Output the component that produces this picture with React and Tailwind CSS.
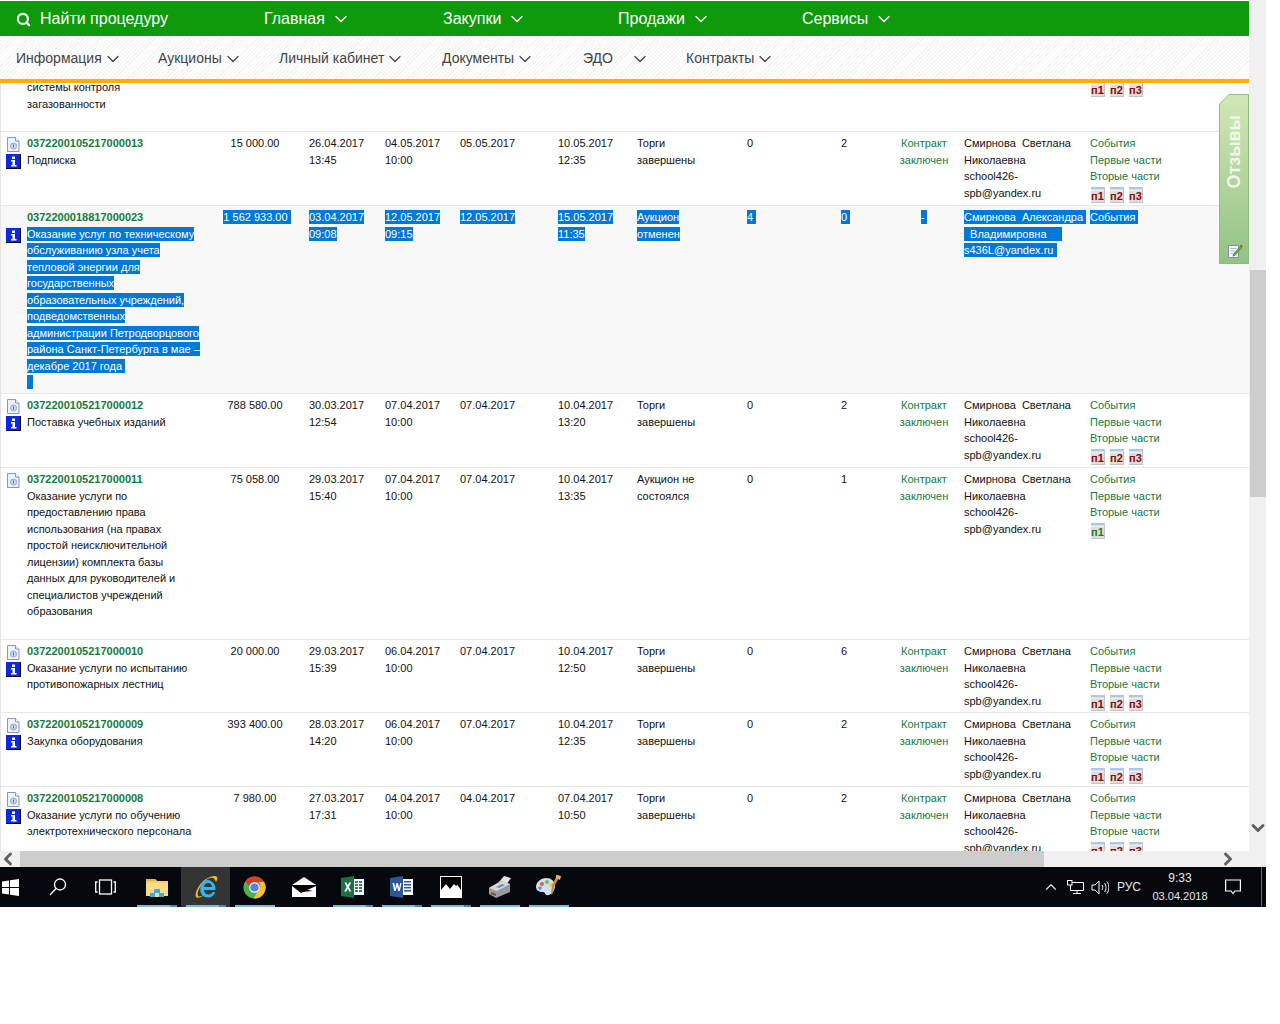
import React from 'react';
import { ChevronDown, ChevronLeft, ChevronRight, ChevronUp, Search } from 'lucide-react';

const topMenu = [
  { label: 'Главная', w: 'w-[179px]' },
  { label: 'Закупки', w: 'w-[175px]' },
  { label: 'Продажи', w: 'w-[184px]' },
  { label: 'Сервисы', w: 'w-[160px]' },
];

const subMenu = [
  { label: 'Информация', w: 'w-[142px]', gap: 'gap-[1px]' },
  { label: 'Аукционы', w: 'w-[121px]', gap: 'gap-[1px]' },
  { label: 'Личный кабинет', w: 'w-[163px]', gap: 'gap-[1px]' },
  { label: 'Документы', w: 'w-[141px]', gap: 'gap-[1px]' },
  { label: 'ЭДО', w: 'w-[103px]', gap: 'gap-[17px]' },
  { label: 'Контракты', w: 'w-[120px]', gap: 'gap-[1px]' },
];

const person = ['Смирнова\u00a0\u00a0Светлана', 'Николаевна', 'school426-', 'spb@yandex.ru'];
const contract = ['Контракт', 'заключен'];
const finished = ['Торги', 'завершены'];
const events = ['События', 'Первые части', 'Вторые части'];

const rows = [
  {
    id: '0372200105217000013', h: 'h-[74px]', doc: true, info: true, title: ['Подписка'], price: '15 000.00',
    start: ['26.04.2017', '13:45'], end: ['04.05.2017', '10:00'], third: '05.05.2017', fourth: ['10.05.2017', '12:35'],
    status: finished, a: '0', b: '2', tags: ['п1', 'п2', 'п3'],
  },
  {
    id: '0372200018817000023', h: 'h-[188px]', info: true, selected: true, bg: 'bg-[#f8f8f8]',
    title: [
      'Оказание услуг по техническому', 'обслуживанию узла учета', 'тепловой энергии для', 'государственных',
      'образовательных учреждений,', 'подведомственных', 'администрации Петродворцового', 'района Санкт-Петербурга в мае –',
      'декабре 2017 года\u00a0', '\u00a0\u00a0',
    ],
    price: '1 562 933.00\u00a0', start: ['03.04.2017', '09:08'], end: ['12.05.2017', '09:15'], third: '12.05.2017',
    fourth: ['15.05.2017', '11:35'], status: ['Аукцион', 'отменен'], a: '4\u00a0', b: '0\u00a0',
    contract: ['-\u00a0'],
    person: ['Смирнова\u00a0\u00a0Александра\u00a0', '\u00a0\u00a0Владимировна\u00a0\u00a0\u00a0\u00a0\u00a0', 's436L@yandex.ru\u00a0'],
    events: ['События\u00a0'],
  },
  {
    id: '0372200105217000012', h: 'h-[74px]', doc: true, info: true, title: ['Поставка учебных изданий'], price: '788 580.00',
    start: ['30.03.2017', '12:54'], end: ['07.04.2017', '10:00'], third: '07.04.2017', fourth: ['10.04.2017', '13:20'],
    status: finished, a: '0', b: '2', tags: ['п1', 'п2', 'п3'],
  },
  {
    id: '0372200105217000011', h: 'h-[172px]', doc: true,
    title: [
      'Оказание услуги по', 'предоставлению права', 'использования (на правах', 'простой неисключительной',
      'лицензии) комплекта базы', 'данных для руководителей и', 'специалистов учреждений', 'образования',
    ],
    price: '75 058.00', start: ['29.03.2017', '15:40'], end: ['07.04.2017', '10:00'], third: '07.04.2017',
    fourth: ['10.04.2017', '13:35'], status: ['Аукцион не', 'состоялся'], a: '0', b: '1', tags: ['п1'], tagGreen: true,
  },
  {
    id: '0372200105217000010', h: 'h-[73px]', doc: true, info: true,
    title: ['Оказание услуги по испытанию', 'противопожарных лестниц'], price: '20 000.00',
    start: ['29.03.2017', '15:39'], end: ['06.04.2017', '10:00'], third: '07.04.2017', fourth: ['10.04.2017', '12:50'],
    status: finished, a: '0', b: '6', tags: ['п1', 'п2', 'п3'],
  },
  {
    id: '0372200105217000009', h: 'h-[74px]', doc: true, info: true, title: ['Закупка оборудования'], price: '393 400.00',
    start: ['28.03.2017', '14:20'], end: ['06.04.2017', '10:00'], third: '07.04.2017', fourth: ['10.04.2017', '12:35'],
    status: finished, a: '0', b: '2', tags: ['п1', 'п2', 'п3'],
  },
  {
    id: '0372200105217000008', h: 'h-[74px]', doc: true, info: true,
    title: ['Оказание услуги по обучению', 'электротехнического персонала'], price: '7 980.00',
    start: ['27.03.2017', '17:31'], end: ['04.04.2017', '10:00'], third: '04.04.2017', fourth: ['07.04.2017', '10:50'],
    status: finished, a: '0', b: '2', tags: ['п1', 'п2', 'п3'],
  },
];

const gridCols = 'grid grid-cols-[27px_178px_104px_76px_75px_98px_79px_110px_94px_43px_80px_126px_1fr]';

// one text line, highlighted the way the browser paints a text selection
const Line = ({ text, selected, green }) => (
  <div className="h-[16.5px] whitespace-pre">
    <span className={selected ? 'bg-[#0078d7] text-white py-[1px]' : green ? 'text-[#157a3c]' : ''}>{text}</span>
  </div>
);

const Lines = ({ items, selected, green }) => (
  <>
    {items.map((t, i) => (
      <Line key={i} text={t} selected={selected} green={green} />
    ))}
  </>
);

const DocIcon = () => (
  <svg width="15" height="15" viewBox="0 0 15 15" className="block">
    <path d="M1.500.5h8l3.500 3.500v10.500h-11.500z" fill="#eef1f8" stroke="#8c96b4" />
    <path d="M9.500.5v3.500h3.500" fill="#fff" stroke="#8c96b4" />
    <circle cx="7.500" cy="9" r="3" fill="#cfdcf2" stroke="#8ea6d6" />
    <rect x="7" y="7.500" width="1" height="3" fill="#3f6fc4" />
  </svg>
);

const InfoIcon = () => (
  <svg width="15" height="15" viewBox="0 0 15 15" className="block">
    <rect width="15" height="15" fill="#000" />
    <rect width="14" height="14" fill="#0a28e6" />
    <path d="M6 2.500h3v2.500h-3zM5 6h4v5h1.500v1.500h-5.500v-1.500h1.500v-3.500h-1.500z" fill="#fff" />
  </svg>
);

const Tag = ({ text, green }) => (
  <div className="relative w-[14px] h-[16px] bg-[#dedede] border-b border-r border-[#c4c4c4] overflow-hidden">
    <div className="h-[2px] bg-[#a9c9ec]" />
    <div className="h-[1px] mt-[1px] bg-[#e9f1fa]" />
    <div className={`absolute bottom-[0px] left-0 right-0 text-center text-[11px] leading-[12px] font-bold ${green ? 'text-[#1d7a1d]' : 'text-[#8b0a0a]'}`}>
      {text}
    </div>
  </div>
);

const Row = ({ r }) => (
  <div className={`${gridCols} ${r.h} ${r.bg || 'bg-white'} border-b border-[#e8e8e8] pt-[3px] text-[11px] leading-[16.5px] text-[#111]`}>
    <div className="flex flex-col pl-[6px] pt-[2px]">
      <div className="h-[17px]">{r.doc && <DocIcon />}</div>
      {r.info && <InfoIcon />}
    </div>
    <div>
      <div className="font-bold text-[#157a3c] h-[16.5px]">{r.id}</div>
      <Lines items={r.title} selected={r.selected} />
    </div>
    <div className={`text-center ${r.selected ? 'pr-0' : 'pr-[4px]'}`}>
      <Line text={r.price} selected={r.selected} />
    </div>
    <div><Lines items={r.start} selected={r.selected} /></div>
    <div><Lines items={r.end} selected={r.selected} /></div>
    <div><Line text={r.third} selected={r.selected} /></div>
    <div><Lines items={r.fourth} selected={r.selected} /></div>
    <div><Lines items={r.status} selected={r.selected} /></div>
    <div><Line text={r.a} selected={r.selected} /></div>
    <div><Line text={r.b} selected={r.selected} /></div>
    <div className="col-start-11 text-center">
      <Lines items={r.contract || contract} selected={r.selected} green />
    </div>
    <div><Lines items={r.person || person} selected={r.selected} /></div>
    <div>
      <Lines items={r.events || events} selected={r.selected} green />
      {r.tags && (
        <div className="flex gap-[5px] pl-[1px] mt-[2px]">
          {r.tags.map((t) => (
            <Tag key={t} text={t} green={r.tagGreen} />
          ))}
        </div>
      )}
    </div>
  </div>
);

const hatch = 'bg-[repeating-linear-gradient(135deg,#f3f3f3_0px,#f3f3f3_1px,#ffffff_1px,#ffffff_3px)]';

const TaskSlot = ({ children, active, split, underline = true }) => (
  <div className={`relative w-[49px] h-full flex items-center justify-center ${active ? 'bg-[#333436]' : ''}`}>
    {children}
    {underline && (
      <div className="absolute bottom-0 left-[5px] right-[4px] flex h-[2px]">
        <div className="flex-1 bg-[#76b9ed]" />
        {split && <div className="w-[7px] bg-[#4f88b5]" />}
      </div>
    )}
  </div>
);

const Icons = {
  folder: (
    <svg width="22" height="20" viewBox="0 0 22 20">
      <path d="M0 2h9l2 2h11v15H0z" fill="#f4cf6b" />
      <path d="M0 2h9l2 2H0z" fill="#e5b64a" />
      <path d="M0 6h22v13H0z" fill="#fbdc85" />
      <path d="M4 16h14v4H4z" fill="#3fa9e0" />
      <path d="M8 12h6v5H8z" fill="#3fa9e0" />
      <path d="M9 16h4v4H9z" fill="#fbdc85" />
    </svg>
  ),
  ie: (
    <svg width="24" height="24" viewBox="0 0 24 24">
      <path d="M2 22C0 19 5 8 12 4c5-3 10-4 11-2 1 1 0 3-1 5-1-2-2-4-3-4-4-1-9 3-13 9-2 4-3 7-2 9 1 1 4 0 6-1-2 2-7 4-8 2z" fill="#e8b923" />
      <path d="M13 5a8.500 8.500 0 0 1 8.500 8.500v1.500H10c.2 3 2 4.500 4.500 4.500 2 0 3.500-1 4.300-2.500h2.500c-1.200 3.500-3.800 5.500-7 5.500-5 0-8-3.500-8-8C6.300 9 9 5 13 5zm-3 7h8c-.2-2.500-1.800-4-4-4s-3.700 1.500-4 4z" fill="#35b4ee" />
    </svg>
  ),
  chrome: (
    <svg width="23" height="23" viewBox="0 0 24 24">
      <circle cx="12" cy="12" r="11.500" fill="#4caf50" />
      <path d="M12 .5a11.500 11.500 0 0 1 10 5.750H12a5.750 5.750 0 0 0-5.500 4L2.300 5.800A11.500 11.500 0 0 1 12 .5z" fill="#dd3b30" />
      <path d="M22 6.250A11.500 11.500 0 0 1 11 23.500l5-8.500a5.750 5.750 0 0 0 .500-8.750z" fill="#fbc02d" />
      <circle cx="12" cy="12" r="5.500" fill="#fff" />
      <circle cx="12" cy="12" r="4.300" fill="#4d84e8" />
    </svg>
  ),
  mail: (
    <svg width="24" height="20" viewBox="0 0 24 20">
      <path d="M12 0l12 8H0z" fill="#fff" />
      <path d="M0 9l9 7 15-7v11H0z" fill="#fff" />
      <path d="M0 8h24L11 12l10 2-12 1z" fill="#000" />
    </svg>
  ),
  excel: (
    <svg width="23" height="22" viewBox="0 0 23 22">
      <path d="M12 3h11v16H12z" fill="#fff" />
      <path d="M14 5h3v2h-3zM18 5h3v2h-3zM14 8h3v2h-3zM18 8h3v2h-3zM14 11h3v2h-3zM18 11h3v2h-3zM14 14h3v2h-3zM18 14h3v2h-3z" fill="#2f8a57" />
      <path d="M0 2l13-2v22L0 20z" fill="#1e7145" />
      <path d="M3.500 6.500h2l1.300 2.800 1.400-2.800h2L7.900 11l2.400 4.500h-2l-1.500-3-1.500 3h-2L5.700 11z" fill="#fff" />
    </svg>
  ),
  word: (
    <svg width="23" height="22" viewBox="0 0 23 22">
      <path d="M12 3h11v16H12z" fill="#fff" />
      <path d="M14 5h7v1.500h-7zM14 8h7v1.500h-7zM14 11h7v1.500h-7zM14 14h7v1.500h-7z" fill="#2b579a" />
      <path d="M0 2l13-2v22L0 20z" fill="#2b579a" />
      <path d="M2.500 7h1.700l1 5 1.300-5h1.400l1.300 5 1-5h1.300L9.800 15H8.300L7 10.300 5.700 15H4.200z" fill="#fff" />
    </svg>
  ),
  photos: (
    <svg width="22" height="22" viewBox="0 0 22 22">
      <rect x=".5" y=".5" width="21" height="21" fill="#000" stroke="#fff" />
      <path d="M1 21v-7l5-6 4 5 4-5 2 2 1.500-1 3.500 5v7z" fill="#fff" />
    </svg>
  ),
  fax: (
    <svg width="24" height="22" viewBox="0 0 24 22">
      <path d="M11 6l5-6 7 2-5 7z" fill="#e4e4e4" />
      <path d="M1 12l12-7 9 3v8l-14 6-7-4z" fill="#9a9a9a" />
      <path d="M1 12l12-7 9 3-13 7z" fill="#d6d6d6" />
      <path d="M8 11l6-3 3 1-6 3z" fill="#4f9bd1" />
      <path d="M3 16l5 2 0 2-5-2z" fill="#5b5b5b" />
    </svg>
  ),
  palette: (
    <svg width="25" height="24" viewBox="0 0 25 24">
      <path d="M10 3C5 3 0 7 0 12c0 4 4 5 7 5 2 0 2 2 3 3 5 1 9-4 9-9 0-5-4-8-9-8z" fill="#cfe2ee" />
      <circle cx="6" cy="9" r="2" fill="#e25b4e" />
      <circle cx="11" cy="7" r="2" fill="#7bbf4e" />
      <circle cx="4" cy="13" r="1.800" fill="#4f9bd1" />
      <circle cx="15" cy="10" r="1.800" fill="#f0c53c" />
      <path d="M24 1l-5 9-3 10-1-1 1-9 5-10z" fill="#c98a3b" />
      <path d="M20 0l5 1-1 4-4-2z" fill="#e4b468" />
    </svg>
  ),
};

export default function App() {
  return (
    <div className="relative w-[1280px] h-[1024px] bg-white overflow-hidden font-['Liberation_Sans',Arial,sans-serif]">
      <div className="w-[1266px] h-[867px] flex flex-col">
        <div className="flex flex-1 min-h-0">
          {/* page column */}
          <div className="relative w-[1249px] flex flex-col">
            <div className="h-[36px] border-t border-white bg-[#0e9a0a] flex items-center text-white text-[16px] pl-[16px] shrink-0">
              <div className="w-[248px] flex items-center gap-[9px] pt-[1px]">
                <Search size={15} strokeWidth={3.5} />
                <span>Найти процедуру</span>
              </div>
              {topMenu.map((m) => (
                <div key={m.label} className={`${m.w} flex items-center gap-[6px]`}>
                  <span>{m.label}</span>
                  <ChevronDown size={20} strokeWidth={1.75} />
                </div>
              ))}
            </div>

            <div className={`h-[47px] ${hatch} border-b-[4px] border-[#ffae00] flex items-center pl-[16px] pt-[2px] text-[14px] text-[#444] shrink-0`}>
              {subMenu.map((m) => (
                <div key={m.label} className={`${m.w} flex items-center ${m.gap}`}>
                  <span>{m.label}</span>
                  <ChevronDown size={20} strokeWidth={1.5} />
                </div>
              ))}
            </div>

            <div className="flex-1 min-h-0 overflow-hidden border-l border-[#e4e4e4]">
              {/* the list is scrolled: only the tail of the first row shows */}
              <div className="-mt-[4px] -ml-[1px]">
                <div className={`${gridCols} h-[53px] bg-white border-b border-[#e8e8e8] text-[11px] leading-[16.5px] text-[#111]`}>
                  <div className="col-start-2">
                    <Line text="системы контроля" />
                    <Line text="загазованности" />
                  </div>
                  <div className="col-start-13 flex gap-[5px] pl-[1px] pt-[2px] items-start">
                    <Tag text="п1" />
                    <Tag text="п2" />
                    <Tag text="п3" />
                  </div>
                </div>
                {rows.map((r) => (
                  <Row key={r.id} r={r} />
                ))}
              </div>
            </div>

            {/* feedback tab lies over the table */}
            <div className="absolute right-0 top-[94px] w-[30px] h-[170px] bg-[#8cbf7c] [clip-path:polygon(10px_0,100%_0,100%_100%,0_100%,0_10px)] p-[1px]">
              <div className="relative w-full h-full bg-gradient-to-b from-[#d3e7b6] to-[#92c385] [clip-path:polygon(9px_0,100%_0,100%_100%,0_100%,0_9px)]">
                <div className="absolute left-[4px] top-[20px] [writing-mode:vertical-rl] rotate-180 text-[18px] leading-[20px] font-bold text-[#f2f8ea]">
                  Отзывы
                </div>
                <svg width="15" height="15" viewBox="0 0 15 15" className="absolute left-[8px] bottom-[5px]">
                  <path d="M.5 2.500h10v12H.5z" fill="#f4f6fb" stroke="#7f8fb0" />
                  <path d="M2.500 5.500h6M2.500 8h4M2.500 10.500h3" stroke="#a9b6cf" />
                  <path d="M5 11l7-8 2 2-7 8-2.500.5z" fill="#5aa83c" />
                  <path d="M12 3l1-1.500 1.500 1.500-.5 2z" fill="#d9362b" />
                </svg>
              </div>
            </div>
          </div>

          {/* vertical scrollbar */}
          <div className="relative w-[17px] bg-[#f0f0f0] pl-[1px]">
            <div className="mt-[270px] h-[227px] bg-[#cdcdcd]" />
            <ChevronDown size={20} strokeWidth={3.5} className="absolute -left-[1px] top-[818px] text-[#606060]" />
          </div>
        </div>

        {/* horizontal scrollbar */}
        <div className="relative h-[16px] bg-[#f0f0f0] shrink-0">
          <ChevronLeft size={20} strokeWidth={3.5} className="absolute -left-[2px] -top-[2px] text-[#606060]" />
          <div className="ml-[20px] w-[1024px] h-full bg-[#cdcdcd]" />
          <ChevronRight size={20} strokeWidth={3.5} className="absolute left-[1218px] -top-[2px] text-[#606060]" />
        </div>
      </div>

      {/* taskbar */}
      <div className="w-[1266px] h-[40px] bg-[#05080c] flex items-center text-white">
        <div className="w-[132px] h-full flex items-center">
          <svg width="17" height="17" viewBox="0 0 17 17" className="ml-[2px]">
            <path d="M0 2.500l7-1v6.500H0zM8 1.300L17 0v8H8zM0 9h7v6.500l-7-1zM8 9h9v8l-9-1.300z" fill="#fff" />
          </svg>
          <svg width="20" height="20" viewBox="0 0 20 20" className="ml-[29px]" fill="none" stroke="#fff" strokeWidth="1.300">
            <circle cx="12" cy="7.500" r="5.500" />
            <path d="M8 11.500l-6 6.500" />
          </svg>
          <svg width="21" height="16" viewBox="0 0 21 16" className="ml-[27px]" fill="none" stroke="#fff" strokeWidth="1.300">
            <rect x="4.500" y="1" width="12" height="14" />
            <path d="M2.500 3H.7v10h1.800M18.500 3h1.800v10h-1.800" />
          </svg>
        </div>
        <div className="h-full flex items-center">
          <TaskSlot split>{Icons.folder}</TaskSlot>
          <TaskSlot active split>{Icons.ie}</TaskSlot>
          <TaskSlot>{Icons.chrome}</TaskSlot>
          <TaskSlot underline={false}>{Icons.mail}</TaskSlot>
          <TaskSlot split>{Icons.excel}</TaskSlot>
          <TaskSlot split>{Icons.word}</TaskSlot>
          <TaskSlot split>{Icons.photos}</TaskSlot>
          <TaskSlot>{Icons.fax}</TaskSlot>
          <TaskSlot>{Icons.palette}</TaskSlot>
        </div>

        {/* tray */}
        <div className="ml-auto h-full flex items-center text-[#e8e8e8]">
          <ChevronUp size={18} strokeWidth={1.500} />
          <svg width="17" height="15" viewBox="0 0 17 15" className="ml-[7px]" fill="none" stroke="#fff" strokeWidth="1">
            <path d="M3.500 2.500h13v8h-13zM10 10.500v3M6 13.500h8" />
            <rect x=".5" y=".5" width="4.500" height="4.500" fill="#05080c" />
          </svg>
          <svg width="18" height="15" viewBox="0 0 18 15" className="ml-[7px]" fill="none" stroke="#fff" strokeWidth="1">
            <path d="M1 5h3l4-4v13l-4-4H1zM11 5c1 1.500 1 3.500 0 5M13.500 3c2 2.500 2 6.500 0 9M16 1.500c2.500 3.500 2.500 8.500 0 12" />
          </svg>
          <div className="w-[40px] text-center text-[12px]">РУС</div>
          <div className="w-[60px] ml-[1px] text-center text-[11px] leading-[18px]">
            <div className="text-[12px]">9:33</div>
            <div>03.04.2018</div>
          </div>
          <svg width="16" height="16" viewBox="0 0 16 16" className="ml-[15px]" fill="none" stroke="#fff" strokeWidth="1.200">
            <path d="M.6 1h14.800v11H10l-2 2.500L6 12H.6z" />
          </svg>
          <div className="w-px h-full bg-[#6a6a6a] ml-[20px] mr-[4px]" />
        </div>
      </div>
    </div>
  );
}
